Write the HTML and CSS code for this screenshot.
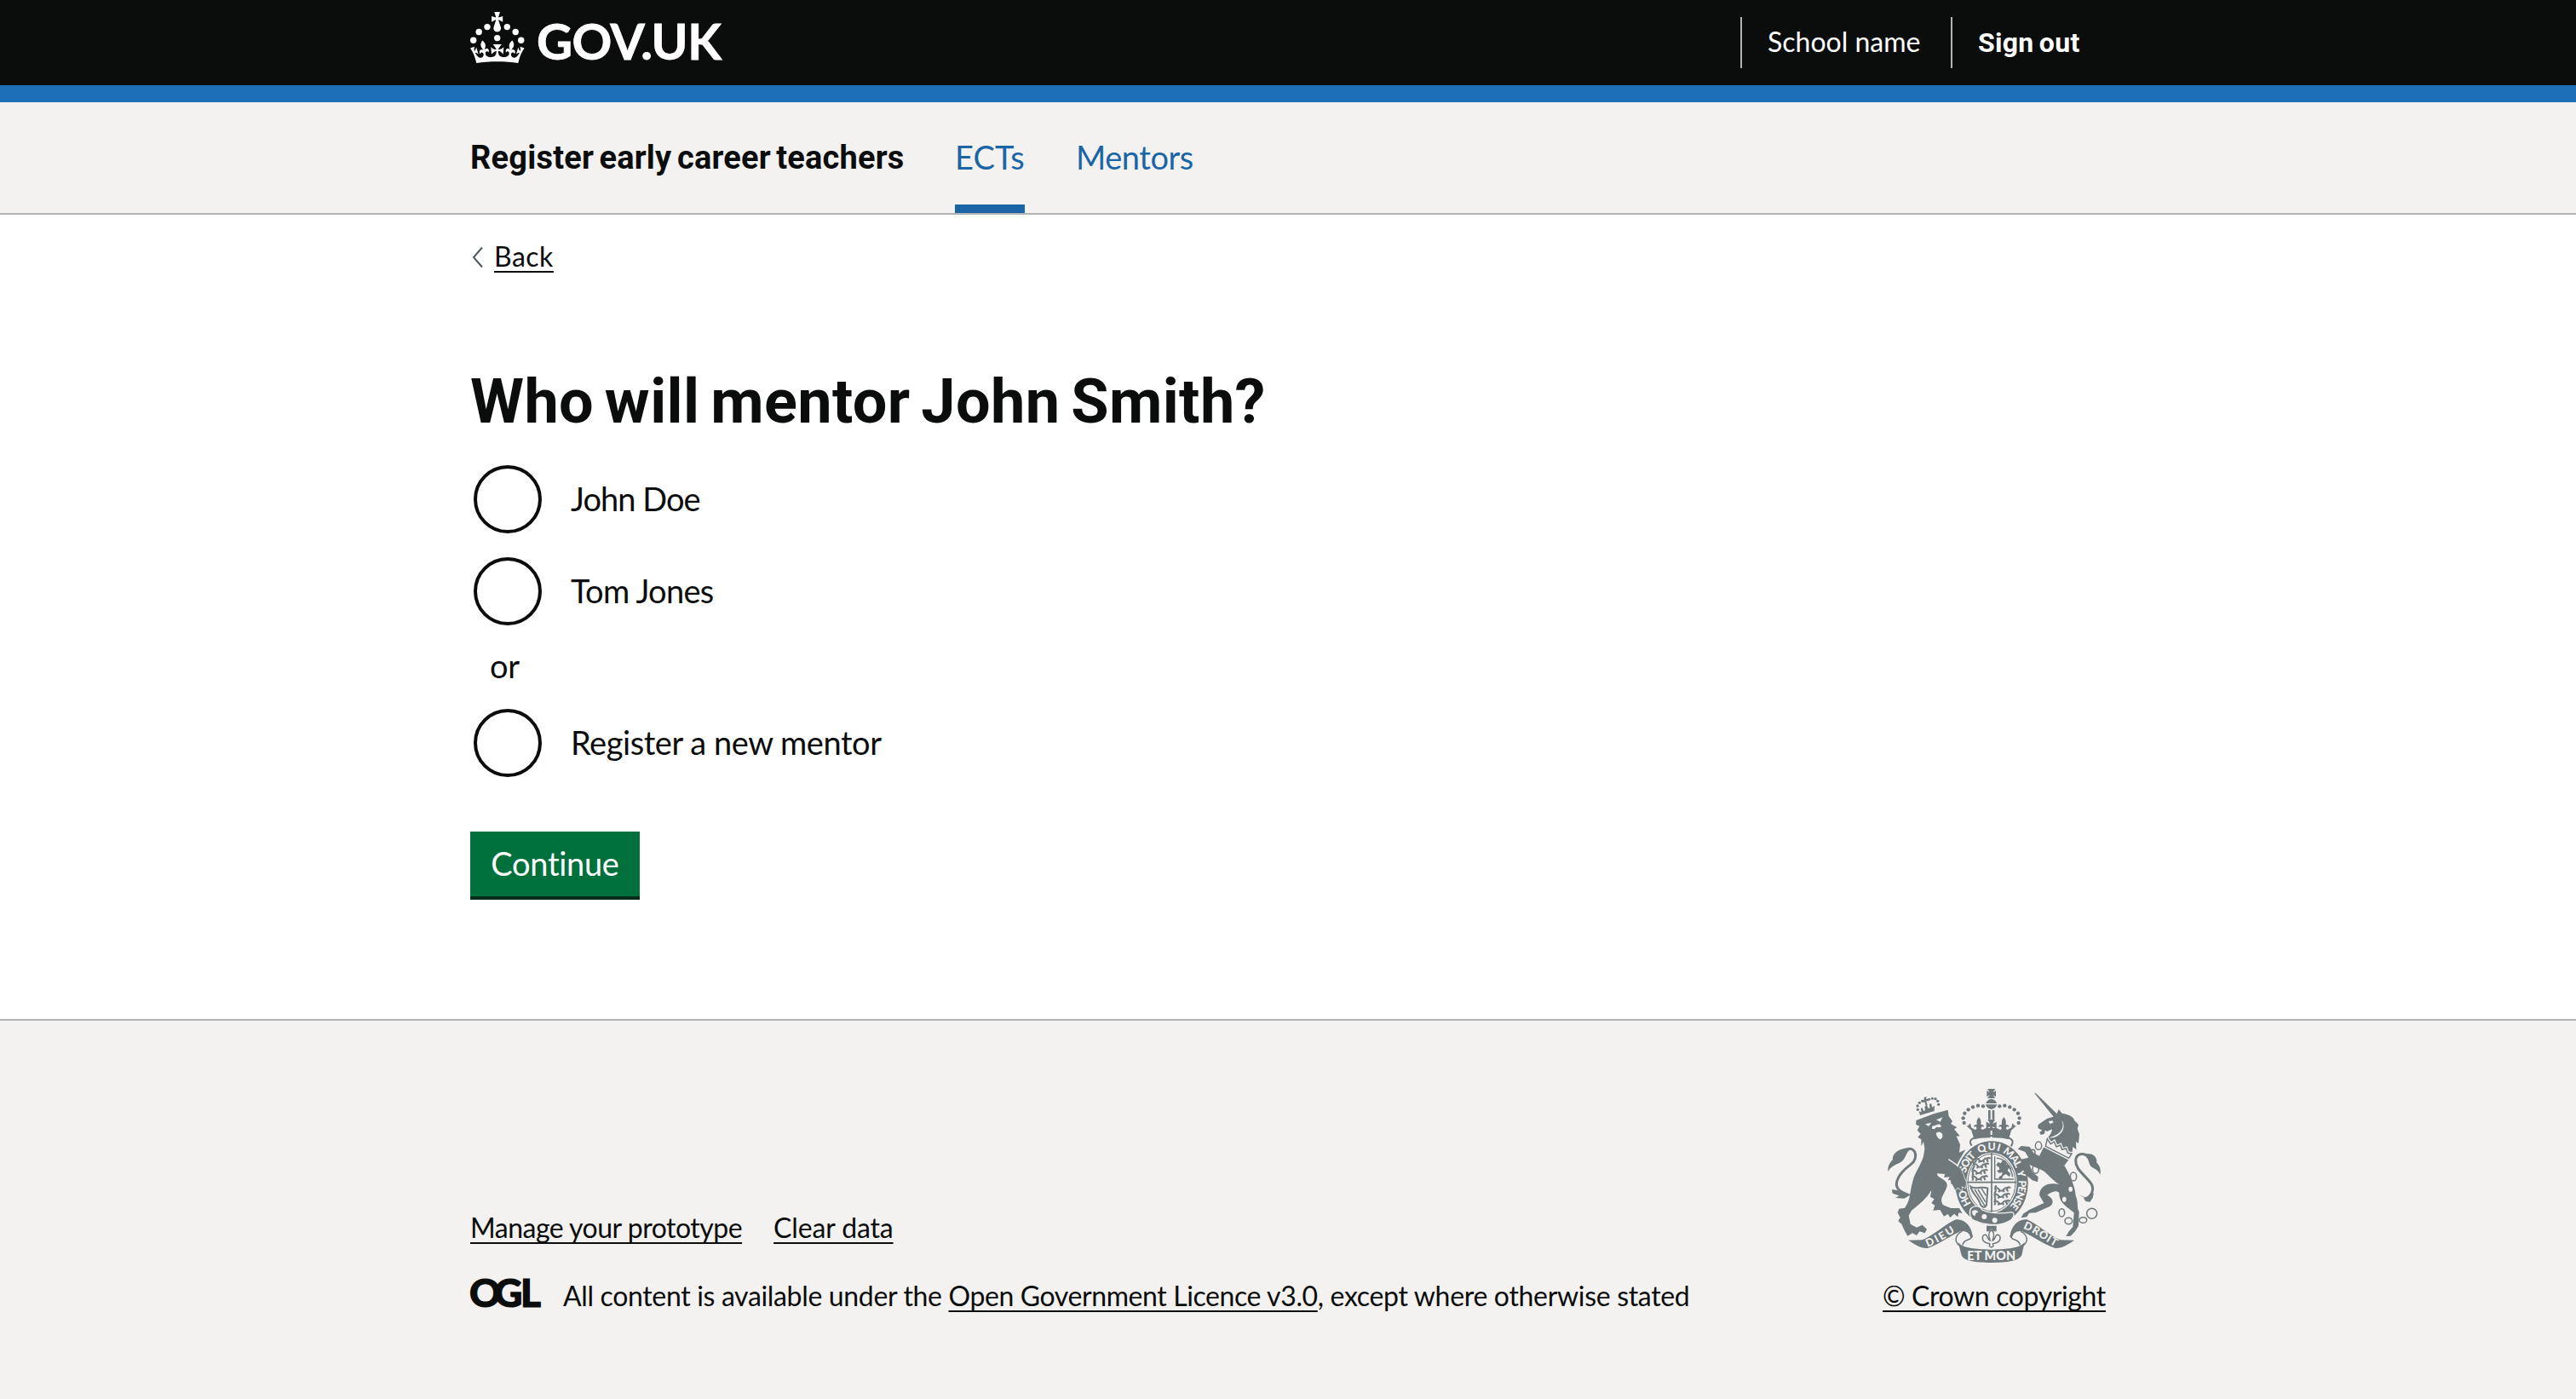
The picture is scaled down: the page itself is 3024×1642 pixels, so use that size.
FILE: index.html
```html
<!DOCTYPE html>
<html lang="en">
<head>
<meta charset="utf-8">
<title>Who will mentor John Smith?</title>
<link rel="stylesheet" href="styles.css">
</head>
<body>
<header class="header">
  <div class="container header-row">
    <a class="logo">
      <svg class="crown" viewBox="0 0 64 60" width="64" height="60" aria-hidden="true">
        <circle cx="20" cy="17.6" r="3.7"/><circle cx="10.2" cy="23.5" r="3.7"/><circle cx="3.7" cy="33.2" r="3.7"/><circle cx="31.7" cy="30.6" r="3.7"/><circle cx="43.3" cy="17.6" r="3.7"/><circle cx="53.2" cy="23.5" r="3.7"/><circle cx="59.7" cy="33.2" r="3.7"/>
        <path d="M33.1,9.8c.2-.1.3-.3.5-.5l4.6,2.4v-6.8l-4.6,1.5c-.1-.2-.3-.3-.5-.5l1.9-5.9h-6.7l1.9,5.9c-.2.1-.3.3-.5.5l-4.6-1.5v6.8l4.6-2.4c.1.2.3.3.5.5l-2.6,8c-.9,2.8,1.2,5.7,4.1,5.7h0c3,0,5.1-2.9,4.1-5.7l-2.6-8ZM37,37.9s-3.4,3.8-4.1,6.1c2.2,0,4.2-.5,6.4-2.8l-.7,8.5c-2-2.8-4.4-4.1-5.7-3.8.1,3.1.5,6.7,5.8,7.2,3.7.3,6.7-1.5,7-3.8.4-2.6-2-4.3-3.7-1.6-1.4-4.5,2.4-6.1,4.9-3.2-1.9-4.5-1.8-7.7,2.4-10.9,3,4,2.6,7.3-1.2,11.1,2.4-1.3,6.2,0,4,4.6-1.2-2.8-3.7-2.2-4.2.2-.3,1.7.7,3.7,3,4.2,1.9.3,4.7-.9,7-5.9-1.3,0-2.4.7-3.9,1.7l2.4-8c.6,2.3,1.4,3.7,2.2,4.5.6-1.6.5-2.8,0-5.3l5,1.8c-2.6,3.6-5.2,8.7-7.3,17.5-7.4-1.1-15.7-1.7-24.5-1.7h0c-8.8,0-17.1.6-24.5,1.7-2.1-8.9-4.7-13.9-7.3-17.5l5-1.8c-.5,2.5-.6,3.7,0,5.3.8-.8,1.6-2.3,2.2-4.5l2.4,8c-1.5-1-2.6-1.7-3.9-1.7,2.3,5,5.2,6.2,7,5.9,2.3-.4,3.3-2.4,3-4.2-.5-2.4-3-3.1-4.2-.2-2.2-4.6,1.6-6,4-4.6-3.7-3.7-4.2-7.1-1.2-11.1,4.2,3.2,4.3,6.4,2.4,10.9,2.5-2.8,6.3-1.3,4.9,3.2-1.8-2.7-4.1-1-3.7,1.6.3,2.3,3.3,4.1,7,3.8,5.4-.5,5.7-4.2,5.8-7.2-1.3-.2-3.7,1-5.7,3.8l-.7-8.5c2.2,2.3,4.2,2.7,6.4,2.8-.7-2.3-4.1-6.1-4.1-6.1h10.6Z"/>
      </svg>
      <span class="wordmark">GOV.UK</span>
    </a>
    <nav class="account">
      <a class="account-item school">School name</a>
      <a class="account-item sign-out">Sign out</a>
    </nav>
  </div>
</header>
<div class="service">
  <div class="container service-row">
    <a class="service-name">Register early career teachers</a>
    <a class="service-link active">ECTs</a>
    <a class="service-link mentors">Mentors</a>
  </div>
</div>
<div class="page">
<div class="container">
  <a class="back"><svg width="16" height="26" viewBox="0 0 16 26" aria-hidden="true"><path d="M14 1.500 4 13l10 11.500"/></svg><span class="link">Back</span></a>
  <main>
    <h1>Who will mentor John Smith?</h1>
    <div class="radios">
      <label class="radio"><span class="ring"></span><span class="text t-doe">John Doe</span></label>
      <label class="radio"><span class="ring"></span><span class="text t-jones">Tom Jones</span></label>
      <div class="divider">or</div>
      <label class="radio"><span class="ring"></span><span class="text t-new">Register a new mentor</span></label>
    </div>
    <button class="button" type="button">Continue</button>
  </main>
</div>
</div>
<footer class="footer">
  <div class="container footer-row">
    <div class="meta">
      <div class="meta-links"><a class="link manage">Manage your prototype</a><a class="link clear">Clear data</a></div>
      <div class="licence">
        <svg class="ogl" width="84" height="40" viewBox="0 0 84 40" aria-label="OGL"><text y="35" x="-1 28 59">OGL</text></svg>
        <span class="licence-text"><span class="l1">All content is available under the </span><a class="link l2">Open Government Licence v3.0</a><span class="l3">, except where otherwise stated</span></span>
      </div>
    </div>
    <div class="copyright">
      <svg class="arms" viewBox="78 54 750 612" width="250" height="204" aria-hidden="true">
        <defs>
          <path id="garter" d="M444 496A95 113 0 0 1 444 270A95 113 0 0 1 444 496"/>
          <path id="ribbon-left" d="M218 611C250 600 285 578 326 551"/>
          <path id="ribbon-right" d="M554 545C600 562 630 590 676 614"/>
          <g id="charge"><path d="M0 8q8-10 16 0t16 0 16-2M6 8l-4 9M18 10l-3 8M30 8l4 9M42 6l6 9M44 4q6-8 12 0M4 4q-4-8 4-8"/></g>
        </defs>
        <!-- lion -->
        <path d="M178 165L240 142 290 128 293 150 306 168 300 177 322 190 312 196 332 220 320 221 333 250 330 278 352 268 330 305 320 325 340 345 356 385 352 402 338 395 340 412 325 400 316 410 312 392 300 388 306 374 290 376 296 364 276 366 280 354 252 352C250 368 290 372 287 395 280 425 258 435 272 462L300 474 330 474 341 492 328 490 325 505 312 494 298 507 290 495 276 503 262 480 238 482 244 464 232 456 242 442 228 434 232 410C215 440 190 460 162 482L152 500 158 530 180 542 200 533 216 548 209 562 190 556 180 570 165 562 148 572 138 554 127 530 115 520 122 507 113 490 118 476 138 473C160 445 156 410 165 385 176 335 205 320 208 262L204 240 196 256 196 232 184 224 194 212 182 200 190 185 178 180Z"/>
        <g class="light"><path d="M210 178l22-5-10 13zM249 163l22-9-8 16zM234 186l26-8 8 8-8 4-10-2-8 8-8-2zM248 210q12-10 22 2 4 12-6 20-12-2-16-22z"/></g>
        <path class="light-line" d="M292 302L345 338"/>
        <path class="line" stroke-width="9" d="M150 428C118 415 98 400 115 368 135 325 178 322 176 288 175 270 163 262 148 266"/>
        <path d="M165 262C125 258 92 280 96 303 84 315 76 330 80 345 92 318 122 322 136 300 145 285 145 275 165 262ZM93 408L128 414 160 426 136 440 106 438 118 430 95 422Z"/>
        <g><circle cx="184" cy="127" r="5"/><circle cx="183" cy="114" r="5"/><circle cx="190" cy="103" r="5"/><circle cx="200" cy="97" r="5"/><circle cx="224" cy="91" r="4.500"/><circle cx="235" cy="88" r="4.500"/><circle cx="246" cy="89" r="5"/><circle cx="254" cy="97" r="5"/><circle cx="257" cy="109" r="5"/><path d="M206 84l9-2-2 7 8 0 1 8-8 0 4 14-6 3-4-14-7 3-1-8 6-3zM188 133l9 3-3-12 6-4 4 12 6-2-2-13 8-6 5 12 5-2-1-14 6-1 4 13 8-6-1 19-50 15z"/></g>
        <!-- royal crown -->
        <g id="arch"><circle cx="414" cy="115" r="6.500"/><circle cx="396" cy="113" r="6.500"/><circle cx="378" cy="118" r="6.500"/><circle cx="362" cy="127" r="6.500"/><circle cx="349" cy="140" r="6.500"/><circle cx="344" cy="157" r="6.500"/><circle cx="347" cy="174" r="6.500"/><path d="M353 182l6 3 10-10 3 15 14 8 6-4-4-8-7 2q0-10 11-8-3-16 7-26 10 10 7 26 11-2 11 8l-7-2-4 8 6 4 12-6 16 0v34q-42 0-58 6l-9-32z"/></g>
        <use href="#arch" transform="matrix(-1 0 0 1 886 0)"/>
        <path d="M429 54h28l-9 13 11-7v22l-11-7 9 12h-28l9-12-11 7V60l11 7zM424 105q2-12 19-16 17 4 19 16zM423 109h40q-4 15-20 17-16-2-20-17zM432 129h8v32h-8zM446 129h8v32h-8zM430 162h26l-9 15 14-7v24l-14-7 4 14h-16l4-14-14 7v-24l14 7z"/>
        <path class="line" stroke-width="6" d="M374 254C362 238 372 228 390 226 425 217 461 217 498 226 516 228 524 240 512 256"/>
        <!-- garter and shield -->
        <path fill-rule="evenodd" d="M444 238A128 147 0 0 1 444 533A128 147 0 0 1 444 238ZM444 278A89 106 0 0 0 444 490A89 106 0 0 0 444 278Z"/>
        <ellipse class="line hair" cx="444" cy="384" rx="84" ry="101"/>
        <path class="line" stroke-width="5" d="M444 280V490M358 383H532"/>
        <g class="motto ring-text">
          <text><textPath href="#garter" startOffset="84" textLength="54">HO</textPath></text>
          <text><textPath href="#garter" startOffset="196" textLength="72">SOIT</textPath></text>
          <text><textPath href="#garter" startOffset="281" textLength="74">QUI</textPath></text>
          <text><textPath href="#garter" startOffset="366" textLength="74">MAL</textPath></text>
          <text><textPath href="#garter" startOffset="450">Y</textPath></text>
          <text><textPath href="#garter" startOffset="483" textLength="100">PENSE</textPath></text>
        </g>
        <g class="line charges"><use href="#charge" x="378" y="316"/><use href="#charge" x="374" y="338"/><use href="#charge" x="374" y="360"/><use href="#charge" x="384" y="296"/><use href="#charge" x="454" y="400"/><use href="#charge" x="452" y="422"/><use href="#charge" x="452" y="446"/></g>
        <path class="line thin" d="M455 292V372H522M462 298q44 4 56 66"/>
        <path d="M466 312l10 4 8-12 10 4 2 12 12 4 8 14-12-4-4 8 10 10-2 12-14-10-10 6-4 12-12-2 4-8 8-4 2-10-12 2-8-8 10-4-2-8-10-6z"/>
        <path class="line" stroke-width="6" d="M370 398C385 410 408 396 430 404L426 462C420 476 410 470 405 462 398 435 376 425 370 398Z"/>
        <path class="line thin" d="M384 408L420 466M396 408L422 452M408 404L424 430"/>
        <path class="edge" d="M372 474C385 462 405 466 410 480 450 498 490 492 515 488 530 492 520 515 500 522 460 542 410 530 380 516 366 508 364 484 372 474Z"/>
        <g class="light"><circle cx="418" cy="504" r="9"/><circle cx="455" cy="517" r="9"/><path d="M376 484q14-8 22 4-12 0-12 14-14-4-10-18z"/></g>
        <path class="edge" d="M336 335L354 383 352 403 338 397 340 413 325 401 316 410"/>
        <path d="M306 320L336 335 354 383 352 403 338 397 340 413 325 401 316 410 300 380 290 340Z"/>
        <!-- unicorn -->
        <path d="M594 68L600 70 674 142 662 152ZM662 152L674 142 680 126 692 140C715 144 733 152 736 166L750 180 746 194 753 214 750 246 741 240 742 268 730 258 727 284 638 230C650 218 658 205 656 196L640 204 632 200 630 212 618 216 612 208 622 200 607 192 608 180 640 158Z"/>
        <path class="light" d="M690 164C704 190 688 214 646 226 684 230 712 190 690 164ZM644 168l14-2 4 6-12 6z"/>
        <path d="M628 258L718 300 700 324C716 350 738 395 740 430 752 460 742 470 752 486L750 536 738 556 722 572 706 573 716 556 730 540 734 490C712 470 680 456 682 420 670 408 652 418 640 428 662 440 664 456 650 467L600 490 576 491 568 505 548 508 555 494 576 480 628 456 612 428C614 396 642 382 682 390 650 372 640 345 612 336L578 322 588 348 608 364 606 382 588 376 568 360 546 326 548 302 574 296 562 276 536 266 548 255 578 258 592 280 612 290Z"/>
        <path class="light-line collar" d="M634 256L640 230 652 248 664 240 672 258 686 252 692 268 706 264 712 280 726 282 716 298Z"/>
        <path class="line thin" d="M634 256L640 230 652 248 664 240 672 258 686 252 692 268 706 264 712 280 726 282 716 298Z"/>
        <path class="line" stroke-width="9" d="M770 442C795 436 806 410 796 390 775 358 738 338 740 306 742 286 756 280 776 286"/>
        <path d="M762 284C800 276 816 292 814 314 824 322 830 338 826 356 816 332 800 338 790 322 784 304 784 294 762 284ZM752 426L776 438 804 420 800 438 790 452 774 450 776 442Z"/>
        <g class="line thin"><ellipse cx="609" cy="254" rx="11" ry="14"/><ellipse cx="589" cy="278" rx="8" ry="10"/><ellipse cx="599" cy="337" rx="11" ry="15"/><ellipse cx="732" cy="363" rx="11" ry="15"/><ellipse cx="691" cy="490" rx="10" ry="14"/><ellipse cx="715" cy="519" rx="13" ry="11"/><ellipse cx="766" cy="516" rx="13" ry="10"/><circle cx="797" cy="493" r="18"/></g>
        <g class="light"><ellipse cx="722" cy="407" rx="7" ry="9"/><ellipse cx="700" cy="443" rx="7" ry="9"/></g>
        <!-- motto ribbon and pendant -->
        <g id="curl"><path d="M150 587L200 586C240 570 280 530 318 514 346 510 374 536 377 572L370 580C368 560 350 552 335 556 296 572 260 602 218 615 192 616 172 600 150 587Z"/><path class="line thin" d="M340 556C316 566 310 592 332 606M376 570C376 590 345 580 342 604"/></g>
        <use href="#curl" transform="matrix(-1 0 0 1 886 0)"/>
        <path d="M326 594C340 612 370 618 443 620 516 618 546 612 560 594L550 640C540 660 500 666 443 666 386 666 346 660 338 640Z"/>
        <g class="motto"><text><textPath href="#ribbon-left" textLength="112">DIEU</textPath></text><text><textPath href="#ribbon-right" textLength="130">DROIT</textPath></text><text x="358" y="656" class="big" textLength="170">ET MON</text></g>
        <path d="M426 536H461V556H451L443 546 435 556H426Z"/>
        <path class="line thin" d="M443 550C430 562 434 574 439 588 432 590 432 576 424 568 408 566 410 586 418 592 426 600 434 596 438 600L436 608 443 612 450 608 448 600C452 596 460 600 468 592 476 586 478 566 462 568 454 576 454 590 447 588 452 574 456 562 443 550Z"/>
      </svg>
      <a class="link crown-link">© Crown copyright</a>
    </div>
  </div>
</footer>
</body>
</html>
```
FILE: styles.css
```css
* { box-sizing: border-box; }

body {
  margin: 0;
  min-height: 1642px;
  background: #f3f2f1;
  color: #0b0c0c;
  font-family: Lato, "Noto Sans", sans-serif;
  font-size: 38px;
  display: flex;
  flex-direction: column;
}

.container { width: 1920px; margin: 0 auto; }

.link {
  text-decoration: underline;
  text-decoration-thickness: 2px;
  text-underline-offset: 5px;
  text-decoration-skip-ink: none;
}

/* Header */
.header { background: #0b0c0c; color: #fff; height: 120px; border-bottom: 20px solid #1d70b8; }
.header-row { display: flex; justify-content: space-between; height: 100px; }
.logo { display: flex; padding-top: 14px; gap: 14px; }
.crown { fill: #fff; display: block; }
.wordmark {
  font-size: 58px;
  line-height: 68px;
  font-weight: 700;
  letter-spacing: -0.5px;
  -webkit-text-stroke: 0.8px #fff;
}
.account { display: flex; align-items: flex-start; padding-top: 20px; font-size: 32px; }
.account-item { height: 60px; line-height: 57px; border-left: 2px solid #b1b4b6; padding-left: 30px; white-space: nowrap; }
.school { width: 247px; }
.sign-out { width: 182px; font-family: Roboto, sans-serif; font-weight: 700; line-height: 60px; letter-spacing: 0.3px; word-spacing: -2px; }

/* Service navigation */
.service { height: 132px; border-bottom: 2px solid #b1b4b6; }
.service-row { display: flex; gap: 60px; height: 130px; }
.service-name { font-family: Roboto, sans-serif; font-weight: 700; line-height: 130px; letter-spacing: 0.2px; word-spacing: -3.2px; width: 509px; white-space: nowrap; }
.service-link { height: 130px; line-height: 128px; color: #1a65a6; }
.active { box-shadow: inset 0 -10px #1a65a6; letter-spacing: 0.17px; }
.mentors { letter-spacing: -0.45px; }

/* Content */
.page { height: 944px; background: #fff; }
.back { display: flex; align-items: center; gap: 12px; padding-top: 30px; height: 68px; font-size: 32px; line-height: 38px; letter-spacing: 0.5px; }
.back svg { fill: none; stroke: #505a5f; stroke-width: 2px; margin-top: 2px; }
h1 {
  margin: 0;
  padding-top: 112px;
  font: 700 72px/80px Roboto, sans-serif;
  letter-spacing: 0.4px;
  word-spacing: -5.6px;
  height: 222px;
}
.radios { display: flex; flex-direction: column; gap: 20px; }
.radio { display: flex; align-items: center; height: 88px; padding-left: 4px; gap: 34px; }
.ring { width: 80px; height: 80px; border: 4px solid #0b0c0c; border-radius: 50%; }
.text { line-height: 44px; padding-bottom: 3px; }
.t-doe { letter-spacing: -0.95px; }
.t-jones { letter-spacing: -0.7px; }
.t-new { letter-spacing: -0.45px; }
.divider { height: 50px; line-height: 47px; padding-left: 23px; letter-spacing: -0.3px; }
.button {
  display: block;
  margin: 60px 0 0;
  width: 199px;
  height: 76px;
  padding: 0 0 2px;
  border: 0;
  background: #00703c;
  box-shadow: 0 4px 0 #002d18;
  color: #fff;
  font: 38px/74px Lato, sans-serif;
  letter-spacing: -0.3px;
}

/* Footer */
.footer { border-top: 2px solid #b1b4b6; padding-top: 80px; flex: 1; }
.footer-row { display: flex; justify-content: space-between; align-items: flex-end; height: 263px; font-size: 32px; line-height: 40px; }
.meta { display: flex; flex-direction: column; gap: 40px; }
.meta-links { display: flex; gap: 37px; }
.manage { letter-spacing: -0.5px; }
.clear { letter-spacing: -0.14px; }
.licence { display: flex; gap: 25px; }
.ogl { display: block; overflow: visible; margin-top: -2px; }
.ogl text { font: 900 46px Lato, sans-serif; fill: #0b0c0c; stroke: #0b0c0c; stroke-width: 1.2px; }
.licence-text { white-space: pre; }
.l1 { letter-spacing: -0.34px; }
.l2 { letter-spacing: -0.4px; }
.l3 { letter-spacing: -0.32px; }
.copyright { width: 262px; height: 263px; display: flex; flex-direction: column; justify-content: space-between; align-items: center; white-space: nowrap; }
.crown-link { letter-spacing: -0.38px; }

/* Coat of arms */
.arms { fill: #6f787b; overflow: visible; }
.arms .light, .motto { fill: #f3f2f1; }
.arms .line { fill: none; stroke: #6f787b; }
.arms .thin { stroke-width: 4.5px; }
.arms .charges { stroke-width: 6px; }
.arms .hair { stroke-width: 3px; }
.arms .edge { stroke: #f3f2f1; stroke-width: 4px; }
.arms .light-line { stroke: #f3f2f1; stroke-width: 4px; }
.arms .collar { fill: #f3f2f1; stroke-width: 12px; }
.motto { font: 900 38px Lato, sans-serif; }
.motto.ring-text { font-size: 37px; }
.motto .big { font-size: 43px; }
```
